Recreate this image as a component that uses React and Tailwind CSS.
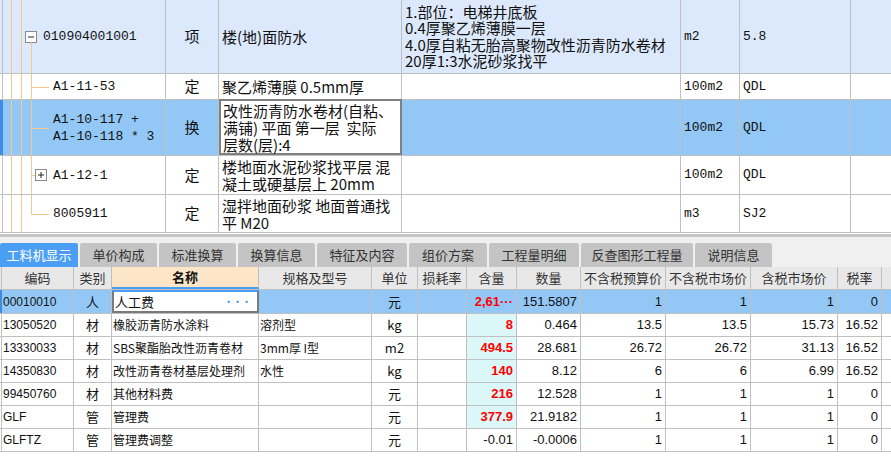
import React from 'react';

const CJK = "font-['Noto_Sans_CJK_SC',sans-serif]";
const MONO = "font-['Liberation_Mono','Noto_Sans_CJK_SC',monospace]";
const SANS = "font-['Liberation_Sans','Noto_Sans_CJK_SC',sans-serif]";

// top tree rows
const topRows = [
  {
    h: 74, hc: 'h-[74px]', bg: 'bg-[#dce9fc]', tree: 'root',
    code: ['010904001001'], type: '项', name: ['楼(地)面防水'],
    feat: ['1.部位：电梯井底板', '0.4厚聚乙烯薄膜一层', '4.0厚自粘无胎高聚物改性沥青防水卷材', '20厚1:3水泥砂浆找平'],
    unit: 'm2', qty: '5.8',
  },
  { h: 26, hc: 'h-[26px]', tree: 'mid', code: ['A1-11-53'], type: '定', name: ['聚乙烯薄膜 0.5mm厚'], unit: '100m2', qty: 'QDL' },
  {
    h: 56, hc: 'h-[56px]', sel: true, tree: 'mid', code: ['A1-10-117 +', 'A1-10-118 * 3'], type: '换',
    name: ['改性沥青防水卷材(自粘、', '满铺) 平面 第一层  实际', '层数(层):4'], unit: '100m2', qty: 'QDL',
  },
  { h: 39, hc: 'h-[39px]', tree: 'plus', code: ['A1-12-1'], type: '定', name: ['楼地面水泥砂浆找平层 混', '凝土或硬基层上 20mm'], unit: '100m2', qty: 'QDL' },
  { h: 38, hc: 'h-[38px]', tree: 'last', code: ['8005911'], type: '定', name: ['湿拌地面砂浆 地面普通找', '平 M20'], unit: 'm3', qty: 'SJ2' },
];

function Tree({ kind, h }) {
  const c = '#f6c88c';
  const m = Math.round(h / 2) + 0.5;
  const w = kind === 'root' ? 40 : 50;
  return (
    <svg width={w} height={h} className="shrink-0">
      <line x1="8.5" y1="0" x2="8.5" y2={h} stroke={c} />
      <line x1="18.5" y1="0" x2="18.5" y2={h} stroke={c} />
      {kind === 'root' && (
        <g>
          <rect x="22.5" y={m - 6} width="11" height="11" fill="#fff" stroke="#8a8a8a" />
          <line x1="25" y1={m - 0.5} x2="31" y2={m - 0.5} stroke="#222" />
          <line x1="28.5" y1={m + 5} x2="28.5" y2={h} stroke={c} />
        </g>
      )}
      {kind === 'mid' && (
        <g>
          <line x1="28.5" y1="0" x2="28.5" y2={h} stroke={c} />
          <line x1="28.5" y1={m} x2="46" y2={m} stroke={c} />
        </g>
      )}
      {kind === 'plus' && (
        <g>
          <line x1="28.5" y1="0" x2="28.5" y2={h} stroke={c} />
          <line x1="28.5" y1={m} x2="32" y2={m} stroke={c} />
          <rect x="32.5" y={m - 6} width="11" height="11" fill="#fff" stroke="#8a8a8a" />
          <line x1="35" y1={m - 0.5} x2="41" y2={m - 0.5} stroke="#222" />
          <line x1="38" y1={m - 3.5} x2="38" y2={m + 2.5} stroke="#222" />
        </g>
      )}
      {kind === 'last' && (
        <g>
          <line x1="28.5" y1="0" x2="28.5" y2={m} stroke={c} />
          <line x1="28.5" y1={m} x2="46" y2={m} stroke={c} />
        </g>
      )}
    </svg>
  );
}

function Lines({ items }) {
  return (
    <div className="whitespace-pre">
      {items.map((t) => (
        <div key={t}>{t}</div>
      ))}
    </div>
  );
}

function TopRow({ r }) {
  const bg = r.sel ? 'bg-[#93c8f6]' : r.bg || 'bg-white';
  return (
    <div className={`flex ${r.hc} ${bg} border-b border-[#c0c0c0] text-[#111]`}>
      {r.sel ? (
        <div className="w-[3px] bg-[#3d8de6]" />
      ) : (
        <div className="w-[3px] border-r border-[#c0c0c0]" />
      )}
      <div className={`w-[163px] flex items-center border-r border-[#c0c0c0] ${MONO} text-[13px] leading-[17px]`}>
        <Tree kind={r.tree} h={r.h - 1} />
        <Lines items={r.code} />
      </div>
      <div className={`w-[53px] flex items-center justify-center border-r border-[#c0c0c0] ${CJK} text-[15px]`}>{r.type}</div>
      {r.sel ? (
        <div className={`w-[183px] flex items-center bg-white border-2 border-[#808080] -mt-px px-[2px] ${CJK} text-[15px] leading-[17px]`}>
          <Lines items={r.name} />
        </div>
      ) : (
        <div className={`w-[183px] flex items-center border-r border-[#c0c0c0] px-[3px] ${CJK} text-[15px] leading-[17px]`}>
          <Lines items={r.name} />
        </div>
      )}
      <div className={`w-[279px] flex items-center border-r border-[#c0c0c0] px-[3px] ${CJK} text-[15px] leading-[16.5px]`}>
        {r.feat && <Lines items={r.feat} />}
      </div>
      <div className={`w-[59px] flex items-center border-r border-[#c0c0c0] pl-[3px] ${MONO} text-[13px]`}>{r.unit}</div>
      <div className={`w-[111px] flex items-center border-r border-[#c0c0c0] pl-[3px] ${MONO} text-[13px]`}>{r.qty}</div>
      <div className="flex-1" />
    </div>
  );
}

const tabs = [
  { t: '工料机显示', w: 'w-[78px]' },
  { t: '单价构成', w: 'w-[77px]' },
  { t: '标准换算', w: 'w-[77px]' },
  { t: '换算信息', w: 'w-[77px]' },
  { t: '特征及内容', w: 'w-[90px]' },
  { t: '组价方案', w: 'w-[78px]' },
  { t: '工程量明细', w: 'w-[90px]' },
  { t: '反查图形工程量', w: 'w-[112px]' },
  { t: '说明信息', w: 'w-[77px]' },
];

const cols = [
  { k: 'code', h: '编码', w: 'w-[72px]' },
  { k: 'cat', h: '类别', w: 'w-[38px]' },
  { k: 'name', h: '名称', w: 'w-[147px]' },
  { k: 'spec', h: '规格及型号', w: 'w-[113px]' },
  { k: 'unit', h: '单位', w: 'w-[46px]' },
  { k: 'loss', h: '损耗率', w: 'w-[49px]' },
  { k: 'amt', h: '含量', w: 'w-[50px]' },
  { k: 'qty', h: '数量', w: 'w-[64px]' },
  { k: 'p1', h: '不含税预算价', w: 'w-[85px]' },
  { k: 'p2', h: '不含税市场价', w: 'w-[85px]' },
  { k: 'p3', h: '含税市场价', w: 'w-[87px]' },
  { k: 'tax', h: '税率', w: 'w-[44px]' },
];

const rows = [
  { code: '00010010', cat: '人', name: '人工费', spec: '', unit: '元', amt: '2,61···', qty: '151.5807', p1: '1', p2: '1', p3: '1', tax: '0', sel: true },
  { code: '13050520', cat: '材', name: '橡胶沥青防水涂料', spec: '溶剂型', unit: 'kg', amt: '8', qty: '0.464', p1: '13.5', p2: '13.5', p3: '15.73', tax: '16.52' },
  { code: '13330033', cat: '材', name: 'SBS聚酯胎改性沥青卷材', spec: '3mm厚 I型', unit: 'm2', amt: '494.5', qty: '28.681', p1: '26.72', p2: '26.72', p3: '31.13', tax: '16.52' },
  { code: '14350830', cat: '材', name: '改性沥青卷材基层处理剂', spec: '水性', unit: 'kg', amt: '140', qty: '8.12', p1: '6', p2: '6', p3: '6.99', tax: '16.52' },
  { code: '99450760', cat: '材', name: '其他材料费', spec: '', unit: '元', amt: '216', qty: '12.528', p1: '1', p2: '1', p3: '1', tax: '0' },
  { code: 'GLF', cat: '管', name: '管理费', spec: '', unit: '元', amt: '377.9', qty: '21.9182', p1: '1', p2: '1', p3: '1', tax: '0' },
  { code: 'GLFTZ', cat: '管', name: '管理费调整', spec: '', unit: '元', amt: '-0.01', qty: '-0.0006', p1: '1', p2: '1', p3: '1', tax: '0', plain: true },
];

function Cell({ c, r }) {
  const v = r[c.k] || '';
  const base = `${c.w} shrink-0 flex items-center border-r border-[#c0c0c0] text-[12px]`;
  if (c.k === 'name' && r.sel) {
    return (
      <div className={`${c.w} shrink-0 flex items-center justify-between bg-white border-2 border-[#7a7a7a] border-t-[#4a9ff5] pl-[1px] pr-[6px] ${CJK} text-[13px] text-[#111]`}>
        <span>{v}</span>
        <span className="text-[#3b8fe0] font-bold text-[9px] tracking-[0px]">•••</span>
      </div>
    );
  }
  if (c.k === 'amt') {
    const bg = r.sel || r.plain ? '' : 'bg-[#dcf7f7]';
    const txt = r.plain ? 'text-[#111] font-normal' : 'text-[#ff0000] font-bold';
    return <div className={`${base} ${bg} ${txt} justify-end pr-[3px] ${SANS} text-[13px]`}>{v}</div>;
  }
  if (c.k === 'cat' || c.k === 'unit') {
    return <div className={`${base} justify-center ${CJK} text-[13px] text-[#111]`}>{v}</div>;
  }
  if (c.k === 'code') {
    return <div className={`${base} pl-[1px] ${SANS} text-[#111]`}>{v}</div>;
  }
  if (c.k === 'name' || c.k === 'spec') {
    return <div className={`${base} pl-[1px] ${CJK} text-[#111] whitespace-nowrap overflow-hidden`}>{v}</div>;
  }
  return <div className={`${base} justify-end pr-[3px] ${SANS} text-[13px] text-[#111]`}>{v}</div>;
}

export default function App() {
  return (
    <div className="w-[891px] h-[472px] bg-white overflow-hidden">
      {/* top: list items */}
      <div className="h-[234px]">
        {topRows.map((r, i) => (
          <TopRow key={i} r={r} />
        ))}
      </div>
      <div className="h-[3px] bg-[#c6c6c6]" />

      {/* tabs */}
      <div className={`h-[30px] flex items-end gap-[2px] bg-[#f0f0f0] ${CJK} text-[13px]`}>
        {tabs.map((t, i) => (
          <div
            key={t.t}
            className={`${t.w} h-[24px] flex items-center justify-center rounded-t-[2px] ${i === 0 ? 'bg-[#4a9ff5] text-white' : 'bg-[#c4c4c4] text-[#333]'}`}
          >
            {t.t}
          </div>
        ))}
      </div>

      {/* grid header */}
      <div className={`flex h-[23px] bg-[#e8e8e8] border-b border-[#c0c0c0] ${CJK} text-[13px] text-[#333]`}>
        <div className="w-[2px] shrink-0 border-r border-[#c0c0c0]" />
        {cols.map((c) =>
          c.k === 'name' ? (
            <div key={c.k} className={`${c.w} shrink-0 flex items-center justify-center bg-[#fde6c8] border-r border-[#c0c0c0] border-b-2 border-b-[#4a9ff5] font-bold text-[#111]`}>
              {c.h}
            </div>
          ) : (
            <div key={c.k} className={`${c.w} shrink-0 flex items-center justify-center border-r border-[#c0c0c0]`}>
              {c.h}
            </div>
          )
        )}
        <div className="flex-1" />
      </div>

      {/* grid rows */}
      {rows.map((r) => (
        <div key={r.code} className={`flex ${r.sel ? 'h-[24px] bg-[#93c8f6]' : 'h-[23px] bg-white'} border-b border-[#c0c0c0]`}>
          {r.sel ? (
            <div className="w-[2px] shrink-0 bg-[#3d8de6]" />
          ) : (
            <div className="w-[2px] shrink-0 border-r border-[#c0c0c0]" />
          )}
          {cols.map((c) => (
            <Cell key={c.k} c={c} r={r} />
          ))}
          <div className="flex-1" />
        </div>
      ))}
    </div>
  );
}
